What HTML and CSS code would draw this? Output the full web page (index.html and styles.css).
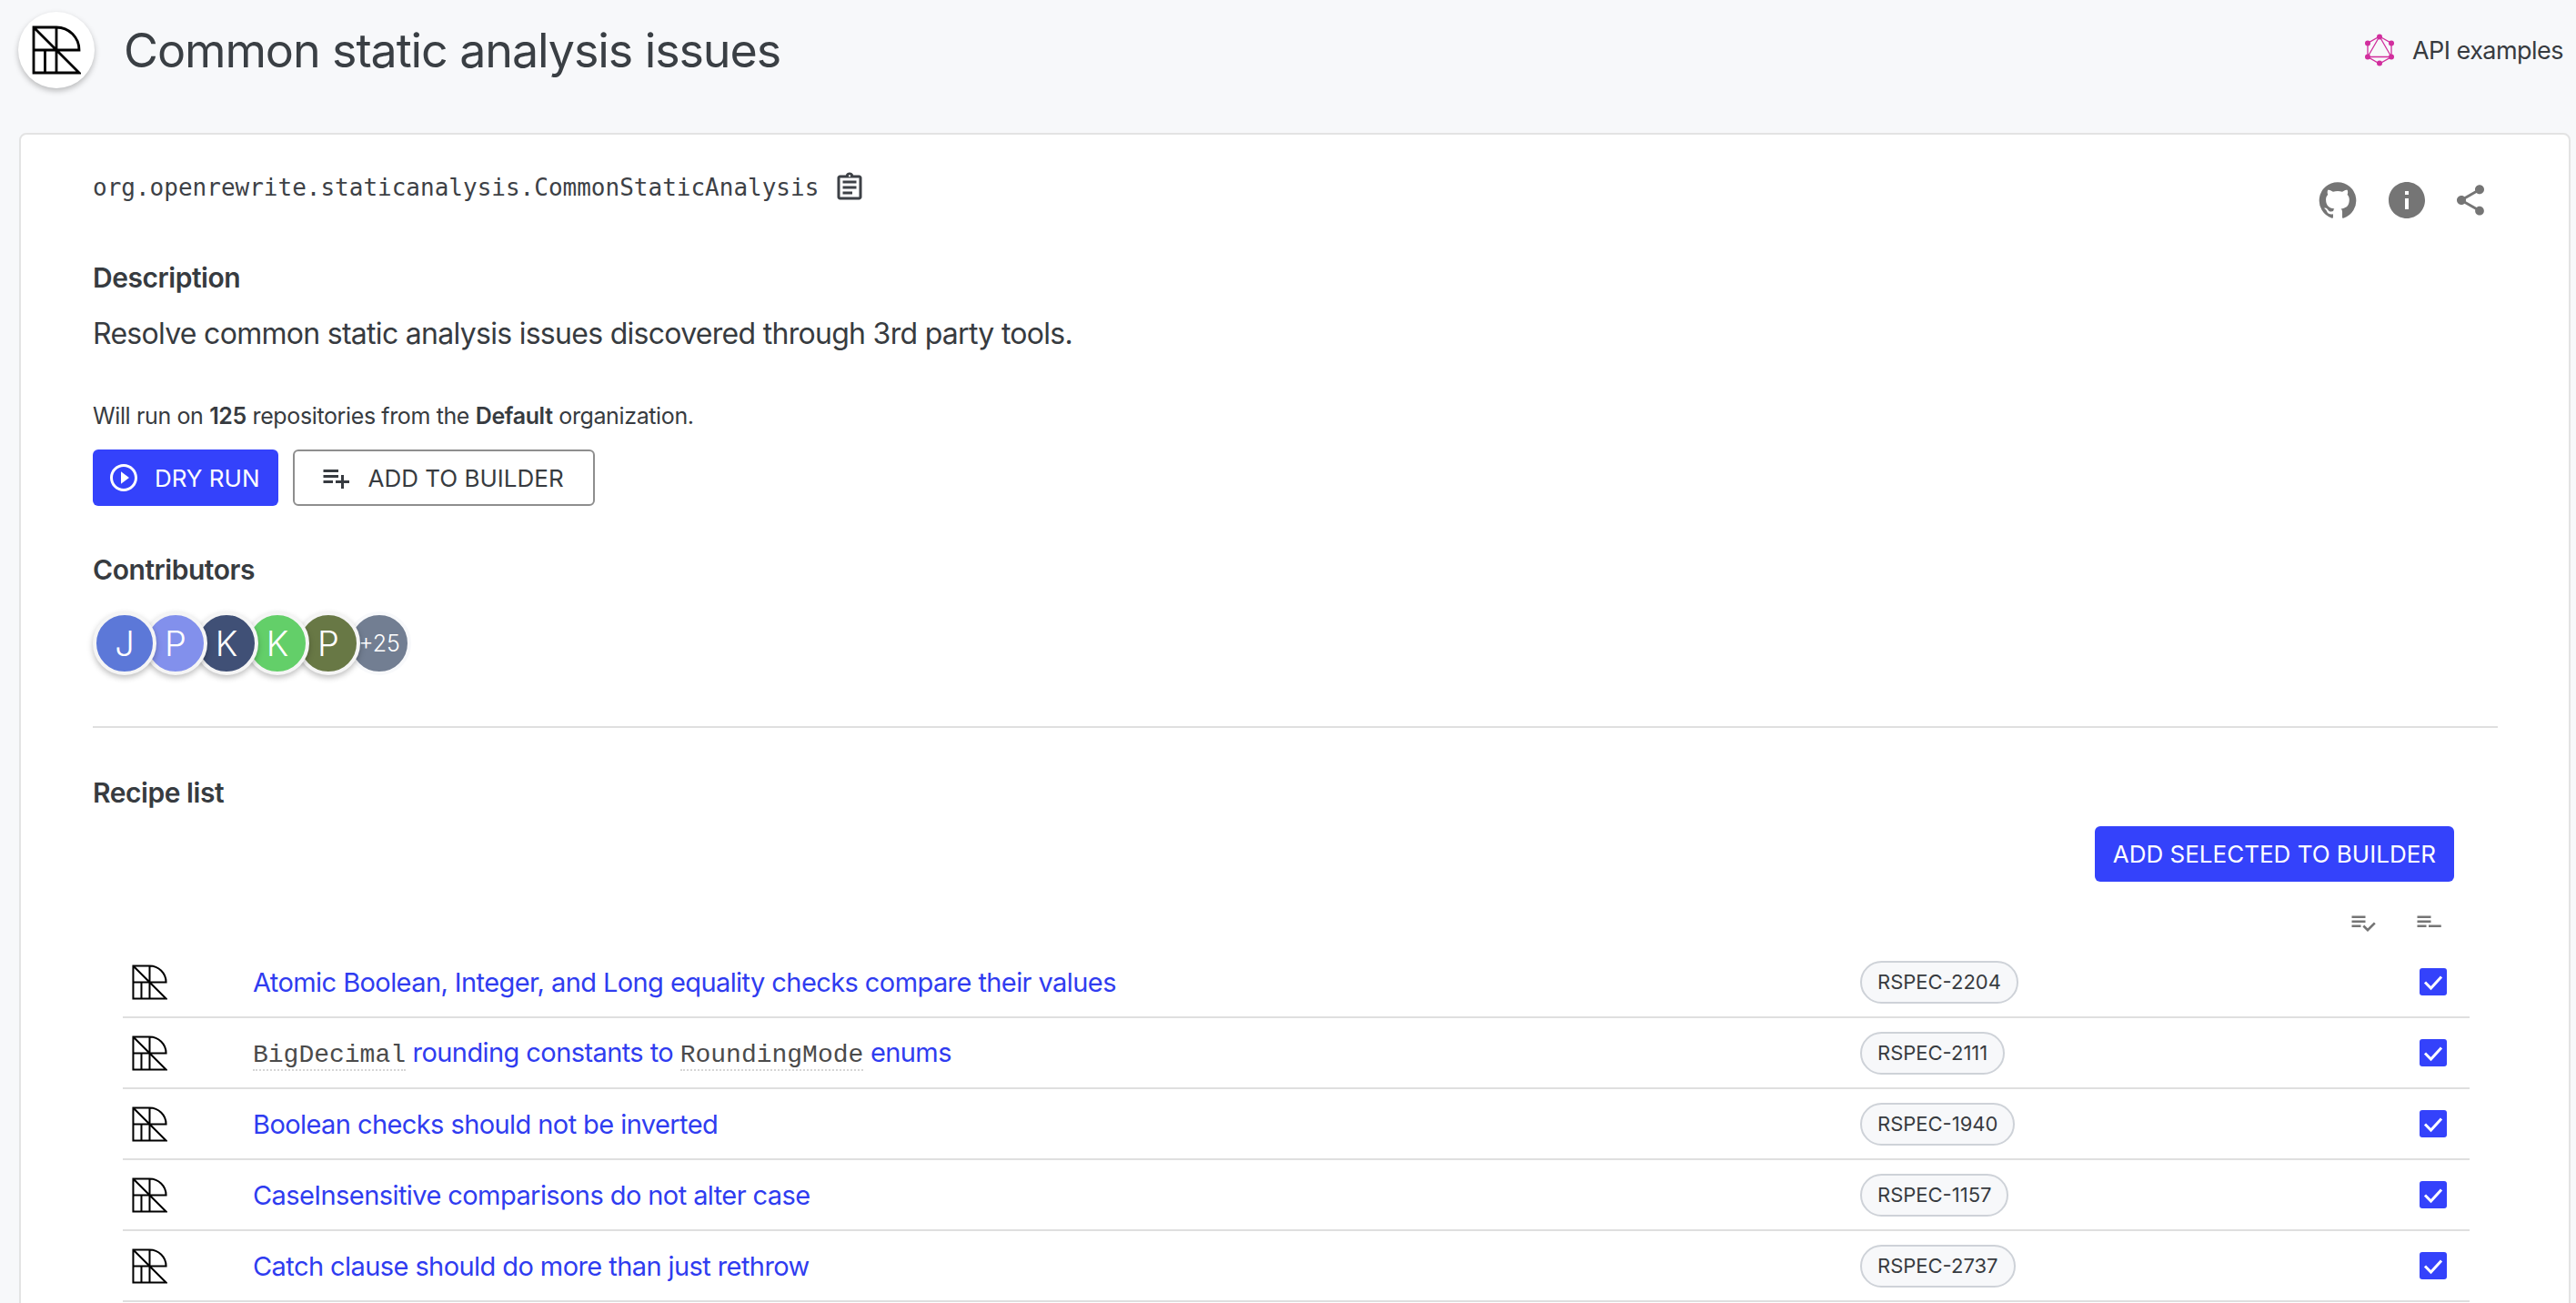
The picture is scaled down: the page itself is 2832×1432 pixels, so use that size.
FILE: index.html
```html
<!DOCTYPE html>
<html lang="en">
<head>
    <meta charset="UTF-8">
    <title>Common static analysis issues</title>
    <link rel="stylesheet" href="styles.css">
</head>
<body>
    <svg class="defs" width="0" height="0">
        <symbol id="logo" viewBox="0 0 54 54">
            <path d="M2 2H27A25 25 0 0 1 52 27H2ZM2 27V52H52L2 2M27 2V52M14.500 27V52" fill="none" stroke="#000" stroke-width="2.800"/>
        </symbol>
    </svg>

    <header class="top">
        <div class="logo-disc"><svg class="logo-big"><use href="#logo"/></svg></div>
        <h1 class="title">Common static analysis issues</h1>
        <a class="api-link">
            <svg class="gql" viewBox="0 0 32 36">
                <path d="M16 3L29 10.500V25.500L16 33L3 25.500V10.500ZM16 3L29 25.500H3Z" fill="none" stroke="#d12e9d" stroke-width="1.300"/>
                <g fill="#d12e9d">
                    <circle cx="16" cy="3.500" r="3"/><circle cx="29" cy="10.500" r="3"/><circle cx="29" cy="25.500" r="3"/>
                    <circle cx="16" cy="32.500" r="3"/><circle cx="3" cy="25.500" r="3"/><circle cx="3" cy="10.500" r="3"/>
                </g>
            </svg>
            API examples
        </a>
    </header>

    <main class="card">
        <div class="id-row">
            <div class="recipe-id">
                <code>org.openrewrite.staticanalysis.CommonStaticAnalysis</code>
                <svg class="clip" viewBox="0 0 24 24"><path d="M7 15h7v2H7zm0-4h10v2H7zm0-4h10v2H7zm12-4h-4.180C14.400 1.840 13.300 1 12 1c-1.300 0-2.400.840-2.820 2H5c-1.100 0-2 .900-2 2v14c0 1.100.900 2 2 2h14c1.100 0 2-.900 2-2V5c0-1.100-.900-2-2-2zm-7-.250c.410 0 .750.340.750.750s-.340.750-.750.750-.750-.340-.750-.750.340-.750.750-.750zM19 19H5V5h14v14z"/></svg>
            </div>
            <div class="actions">
                <svg class="act-git" viewBox="0 0 24 24"><path d="M12 1.270a11 11 0 00-3.480 21.460c.550.090.730-.280.730-.550v-1.840c-3.030.640-3.670-1.460-3.670-1.460-.550-1.290-1.280-1.650-1.280-1.650-.920-.650.100-.650.100-.650 1.100 0 1.730 1.100 1.730 1.100.920 1.650 2.570 1.200 3.210.920a2 2 0 01.640-1.470c-2.470-.270-5.040-1.190-5.040-5.500 0-1.100.460-2.100 1.200-2.840a3.760 3.760 0 010-2.930s.910-.280 3.110 1.100c1.800-.490 3.700-.490 5.500 0 2.100-1.380 3.020-1.100 3.020-1.100a3.760 3.760 0 010 2.930c.830.740 1.200 1.740 1.200 2.940 0 4.210-2.570 5.130-5.040 5.400.450.370.820.920.820 2.020v3.030c0 .270.100.640.730.550A11 11 0 0012 1.270"/></svg>
                <svg class="act-info" viewBox="0 0 24 24"><path d="M12 2C6.480 2 2 6.480 2 12s4.480 10 10 10 10-4.480 10-10S17.520 2 12 2zm1 15h-2v-6h2v6zm0-8h-2V7h2v2z"/></svg>
                <svg class="act-share" viewBox="0 0 24 24"><path d="M18 16.080c-.760 0-1.440.300-1.960.770L8.910 12.700c.050-.230.090-.460.090-.700s-.040-.470-.090-.700l7.050-4.110c.540.500 1.250.810 2.040.810 1.660 0 3-1.340 3-3s-1.340-3-3-3-3 1.340-3 3c0 .240.040.470.090.700L8.040 9.810C7.500 9.310 6.790 9 6 9c-1.660 0-3 1.340-3 3s1.340 3 3 3c.790 0 1.500-.310 2.040-.810l7.120 4.160c-.050.210-.080.430-.080.650 0 1.610 1.310 2.920 2.920 2.920 1.610 0 2.920-1.310 2.920-2.920s-1.310-2.920-2.920-2.920z"/></svg>
            </div>
        </div>

        <h2 class="label desc-label">Description</h2>
        <p class="desc">Resolve common static analysis issues discovered through 3rd party tools.</p>
        <p class="run-note">Will run on <b>125</b> repositories from the <b>Default</b> organization.</p>

        <div class="btn-row">
            <button class="btn btn-primary">
                <svg class="btn-icon" viewBox="0 0 24 24"><path d="M10 16.500l6-4.500-6-4.500v9zM12 2C6.480 2 2 6.480 2 12s4.480 10 10 10 10-4.480 10-10S17.520 2 12 2zm0 18c-4.410 0-8-3.590-8-8s3.590-8 8-8 8 3.590 8 8-3.590 8-8 8z"/></svg>
                DRY RUN
            </button>
            <button class="btn btn-outline">
                <svg class="btn-icon" viewBox="0 0 24 24"><path d="M14 10H3v2h11v-2zm0-4H3v2h11V6zm4 8v-4h-2v4h-4v2h4v4h2v-4h4v-2h-4zM3 16h7v-2H3v2z"/></svg>
                ADD TO BUILDER
            </button>
        </div>

        <h2 class="label contrib-label">Contributors</h2>
        <div class="avatars">
            <span class="avatar a-1">J</span>
            <span class="avatar a-2">P</span>
            <span class="avatar a-3">K</span>
            <span class="avatar a-4">K</span>
            <span class="avatar a-5">P</span>
            <span class="avatar a-more">+25</span>
        </div>

        <hr class="rule">

        <h2 class="label list-label">Recipe list</h2>
        <div class="list-tools">
            <button class="btn btn-primary btn-selected">ADD SELECTED TO BUILDER</button>
            <div class="bulk">
                <svg viewBox="0 0 24 24"><path d="M14 10H2v2h12v-2zm0-4H2v2h12V6zM2 16h8v-2H2v2zm19.500-4.500L23 13l-6.990 7-4.510-4.500L13 14l3.010 3 5.490-5.500z"/></svg>
                <svg viewBox="0 0 24 24"><path d="M14 10H2v2h12v-2zm0-4H2v2h12V6zM2 16h8v-2H2v2zm10-2v2h11v-2z"/></svg>
            </div>
        </div>

        <ul class="recipes">
            <li class="recipe">
                <svg class="recipe-icon"><use href="#logo"/></svg>
                <a class="recipe-name">Atomic Boolean, Integer, and Long equality checks compare their values</a>
                <span class="chip-cell"><span class="chip">RSPEC-2204</span></span>
                <span class="check"><svg viewBox="0 0 30 30"><path d="M6 15.500l6.500 6.500L24 9.500" fill="none" stroke="#fff" stroke-width="3"/></svg></span>
            </li>
            <li class="recipe">
                <svg class="recipe-icon"><use href="#logo"/></svg>
                <a class="recipe-name"><code class="inline">BigDecimal</code> rounding constants to <code class="inline">RoundingMode</code> enums</a>
                <span class="chip-cell"><span class="chip">RSPEC-2111</span></span>
                <span class="check"><svg viewBox="0 0 30 30"><path d="M6 15.500l6.500 6.500L24 9.500" fill="none" stroke="#fff" stroke-width="3"/></svg></span>
            </li>
            <li class="recipe">
                <svg class="recipe-icon"><use href="#logo"/></svg>
                <a class="recipe-name">Boolean checks should not be inverted</a>
                <span class="chip-cell"><span class="chip">RSPEC-1940</span></span>
                <span class="check"><svg viewBox="0 0 30 30"><path d="M6 15.500l6.500 6.500L24 9.500" fill="none" stroke="#fff" stroke-width="3"/></svg></span>
            </li>
            <li class="recipe">
                <svg class="recipe-icon"><use href="#logo"/></svg>
                <a class="recipe-name">CaseInsensitive comparisons do not alter case</a>
                <span class="chip-cell"><span class="chip">RSPEC-1157</span></span>
                <span class="check"><svg viewBox="0 0 30 30"><path d="M6 15.500l6.500 6.500L24 9.500" fill="none" stroke="#fff" stroke-width="3"/></svg></span>
            </li>
            <li class="recipe">
                <svg class="recipe-icon"><use href="#logo"/></svg>
                <a class="recipe-name">Catch clause should do more than just rethrow</a>
                <span class="chip-cell"><span class="chip">RSPEC-2737</span></span>
                <span class="check"><svg viewBox="0 0 30 30"><path d="M6 15.500l6.500 6.500L24 9.500" fill="none" stroke="#fff" stroke-width="3"/></svg></span>
            </li>
        </ul>
    </main>
</body>
</html>
```

FILE: styles.css
```css
* {
    box-sizing: border-box;
}
html, body {
    height: 100%;
}
body {
    margin: 0;
    overflow: hidden;
    background: #f7f8fa;
    color: #373b40;
    font-family: Inter, "Noto Sans", sans-serif;
}
.defs {
    position: absolute;
}
.top {
    display: flex;
    align-items: center;
    height: 146px;
    padding: 0 14px 36px 20px;
}
.logo-disc {
    display: flex;
    align-items: center;
    justify-content: center;
    width: 84px;
    height: 84px;
    border-radius: 50%;
    background: #fff;
    box-shadow: 0 3px 6px rgba(0, 0, 0, 0.25);
}
.logo-big {
    width: 54px;
    height: 54px;
}
.title {
    margin: 0 0 0 32px;
    font-size: 52px;
    font-weight: 400;
    letter-spacing: -1.1px;
    color: #3a3f44;
}
.api-link {
    display: flex;
    align-items: center;
    gap: 20px;
    margin-left: auto;
    font-size: 27px;
    letter-spacing: -0.02em;
}
.gql {
    width: 32px;
    height: 36px;
}
.card {
    height: 1400px;
    margin: 0 6px 0 21px;
    padding: 36px 82px 0 79px;
    background: #fff;
    border: 2px solid #e3e3e3;
    border-radius: 8px;
}
.id-row {
    display: flex;
    justify-content: space-between;
}
.recipe-id {
    display: flex;
    align-items: center;
    gap: 16px;
    height: 44px;
}
code {
    font-family: "DejaVu Sans Mono", monospace;
    font-size: 26px;
    color: #3d4146;
}
.clip {
    width: 36px;
    height: 36px;
    fill: #3d4146;
}
.actions {
    display: flex;
    align-items: center;
    gap: 28px;
    height: 48px;
    margin-top: 12px;
    padding-right: 6px;
}
.actions svg {
    fill: #757575;
}
.act-git {
    width: 44px;
    height: 44px;
}
.act-info {
    width: 48px;
    height: 48px;
    margin: 0 -2px 0 2px;
}
.act-share {
    width: 40px;
    height: 40px;
}
.label {
    margin: 0;
    font-size: 30px;
    line-height: 36px;
    font-weight: 600;
    letter-spacing: -0.015em;
}
.desc-label {
    margin-top: 43px;
}
.desc {
    margin: 24px 0 0;
    font-size: 32px;
    line-height: 40px;
    letter-spacing: -0.71px;
}
.run-note {
    margin: 54px 0 0;
    font-size: 25px;
    line-height: 32px;
    letter-spacing: -0.015em;
}
.run-note b {
    font-weight: 600;
}
.btn-row {
    display: flex;
    gap: 16px;
    margin-top: 21px;
}
.btn {
    display: flex;
    align-items: center;
    height: 62px;
    border-radius: 6px;
    font-family: inherit;
    font-size: 26px;
    font-weight: 400;
}
.btn-primary {
    padding: 0 20px 0 16px;
    gap: 16px;
    border: 0;
    background: #3442fb;
    color: #fff;
    fill: #fff;
}
.btn-outline {
    padding: 0 32px 0 27px;
    gap: 18px;
    border: 2px solid #8e8e8e;
    background: #fff;
    color: #373b40;
    fill: #373b40;
}
.btn-icon {
    width: 36px;
    height: 36px;
}
.contrib-label {
    margin-top: 52px;
}
.avatars {
    display: flex;
    margin-top: 28px;
}
.avatar {
    display: flex;
    align-items: center;
    justify-content: center;
    flex: none;
    width: 70px;
    height: 70px;
    margin-right: -14px;
    border: 4px solid #f5f5f5;
    border-radius: 50%;
    color: #fff;
    font-size: 38px;
    font-weight: 300;
    box-shadow: 0 3px 6px rgba(0, 0, 0, 0.25);
}
.a-1 { background: #5c78d8; z-index: 5; }
.a-2 { background: #8290ec; z-index: 4; }
.a-3 { background: #405076; z-index: 3; }
.a-4 { background: #63cf69; z-index: 2; }
.a-5 { background: #687845; z-index: 1; }
.a-more {
    background: #727e92;
    border-color: #f8f9fb;
    box-shadow: none;
    font-size: 25px;
}
.rule {
    height: 2px;
    margin: 56px 0 0;
    border: 0;
    background: #dfdfdf;
    width: 2644px;
}
.list-label {
    margin-top: 53px;
}
.list-tools {
    display: flex;
    flex-direction: column;
    align-items: flex-end;
    width: 2596px;
}
.btn-selected {
    margin-top: 19px;
    height: 61px;
    padding: 0 20px;
}
.bulk {
    display: flex;
    gap: 42px;
    margin-top: 30px;
    margin-right: 13px;
}
.bulk svg {
    width: 30px;
    height: 30px;
    fill: #757575;
}
.recipes {
    margin: 12px 0 0 33px;
    padding: 0;
    list-style: none;
    width: 2580px;
}
.recipe {
    display: flex;
    align-items: center;
    height: 78px;
    padding-left: 10px;
    border-bottom: 2px solid #dfdfdf;
}
.recipe-icon {
    flex: none;
    width: 39px;
    height: 39px;
}
.recipe-name {
    flex: none;
    width: 1767px;
    margin-left: 94px;
    color: #2f3cf0;
    font-size: 29px;
    letter-spacing: -0.02em;
}
.inline {
    font-family: "Liberation Mono", monospace;
    font-size: 28px;
    letter-spacing: 0;
    color: #4b4b4b;
    border-bottom: 2px dotted #d5d5d5;
}
.chip-cell {
    flex: none;
    width: 615px;
}
.chip {
    display: inline-block;
    height: 47px;
    padding: 0 17px;
    border: 2px solid #ced2d8;
    border-radius: 24px;
    background: #f7f8fa;
    font-size: 22px;
    line-height: 43px;
}
.check {
    flex: none;
    width: 30px;
    height: 30px;
    border-radius: 3px;
    background: #3442fb;
}
.check svg {
    display: block;
}
```
